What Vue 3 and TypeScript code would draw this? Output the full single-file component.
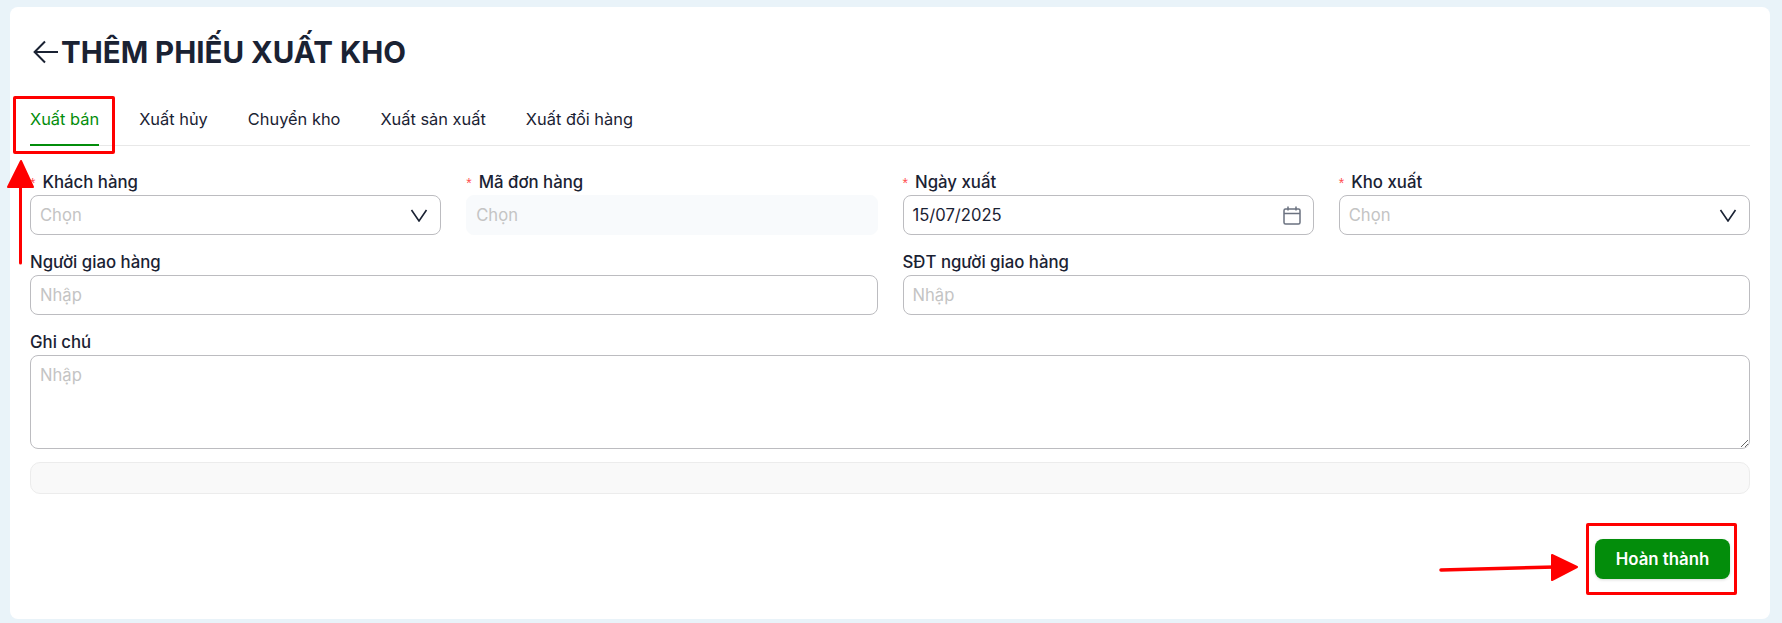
<script setup lang="ts">
const tabs: string[] = ['Xuất bán', 'Xuất hủy', 'Chuyển kho', 'Xuất sản xuất', 'Xuất đổi hàng']
</script>

<template>
  <div class="page">
    <main class="card">
      <header class="head">
        <svg class="back" width="26" height="26" viewBox="0 0 26 26" fill="none" stroke="#1a2233" stroke-width="2" aria-hidden="true">
          <path d="M25 13H2M12 2.500 1.600 13 12 23.500" />
        </svg>
        <h1>THÊM PHIẾU XUẤT KHO</h1>
      </header>

      <nav class="tabs">
        <span v-for="(t, i) in tabs" :key="t" class="tab" :class="{ active: i === 0 }">{{ t }}</span>
      </nav>

      <form class="form">
        <div class="field">
          <label><i>*</i>Khách hàng</label>
          <div class="box">
            <span class="ph">Chọn</span>
            <svg class="chev" width="18" height="13" viewBox="0 0 18 13" fill="none" stroke="#1a2233" stroke-width="1.600"><path d="M1.500 1 9 12l7.500-11" /></svg>
          </div>
        </div>
        <div class="field">
          <label><i>*</i>Mã đơn hàng</label>
          <div class="box disabled"><span class="ph">Chọn</span></div>
        </div>
        <div class="field">
          <label><i>*</i>Ngày xuất</label>
          <div class="box">
            <span class="val">15/07/2025</span>
            <svg width="18" height="19" viewBox="0 0 18 19" fill="none" stroke="#6b7280" stroke-width="1.500"><rect x="1" y="3" width="16" height="15" rx="1.500" /><path d="M1 7.500h16M5 .5v4M13 .5v4" /></svg>
          </div>
        </div>
        <div class="field">
          <label><i>*</i>Kho xuất</label>
          <div class="box">
            <span class="ph">Chọn</span>
            <svg class="chev" width="18" height="13" viewBox="0 0 18 13" fill="none" stroke="#1a2233" stroke-width="1.600"><path d="M1.500 1 9 12l7.500-11" /></svg>
          </div>
        </div>
        <div class="field half">
          <label>Người giao hàng</label>
          <div class="box"><span class="ph">Nhập</span></div>
        </div>
        <div class="field half">
          <label>SĐT người giao hàng</label>
          <div class="box"><span class="ph">Nhập</span></div>
        </div>
        <div class="field full">
          <label>Ghi chú</label>
          <textarea class="area" placeholder="Nhập"></textarea>
        </div>
        <div class="bar full"></div>
      </form>

      <footer class="foot">
        <button type="button" class="done">Hoàn thành</button>
      </footer>
    </main>

    <div class="mark mark-tab"></div>
    <div class="mark mark-btn"></div>
    <svg class="arrows" width="1782" height="623" viewBox="0 0 1782 623" fill="#ff0000" stroke="#ff0000" stroke-linejoin="round" stroke-linecap="round">
      <path d="M20.500 263V186" stroke-width="3" fill="none" />
      <path d="M21 161 33 187 8 187Z" stroke-width="2" />
      <path d="M1441 570 1555 567" stroke-width="3.500" fill="none" />
      <path d="M1552 555 1577 567 1552 580Z" stroke-width="2" />
    </svg>
  </div>
</template>

<style scoped>
.page {
  position: relative;
  width: 1782px;
  height: 623px;
  box-sizing: border-box;
  padding: 7px 12px 4px 10px;
  background: #e9f3f9;
  font-family: Inter, "Noto Sans", sans-serif;
  color: #1a2233;
  overflow: hidden;
}
.card {
  height: 100%;
  box-sizing: border-box;
  background: #fff;
  border-radius: 8px;
  padding: 0 20px;
  display: flex;
  flex-direction: column;
}
.head {
  display: flex;
  align-items: center;
  gap: 2px;
  height: 90px;
  padding-left: 3px;
}
.back { flex: none; }
h1 {
  margin: 0;
  font-size: 29.500px;
  font-weight: 700;
  line-height: 34px;
}
.tabs {
  display: flex;
  gap: 40px;
  height: 48px;
  border-bottom: 1px solid #e8e8e8;
}
.tab {
  height: 48px;
  line-height: 44px;
  font-size: 16.400px;
  box-sizing: border-box;
}
.tab.active {
  color: #038d0b;
  border-bottom: 2px solid #038d0b;
  height: 49px;
}
.form {
  display: grid;
  grid-template-columns: repeat(4, minmax(0, 1fr));
  gap: 15px 25px;
  margin-top: 24px;
}
.field { display: flex; flex-direction: column; }
.half { grid-column: span 2; }
.full { grid-column: 1 / -1; }
label {
  display: block;
  height: 24px;
  margin-bottom: 1px;
  line-height: 24px;
  font-size: 16.800px;
  font-weight: 500;
}
label i {
  font-style: normal;
  font-weight: 400;
  font-size: 14px;
  color: #ff4d4f;
  margin-right: 7px;
  font-family: "Liberation Sans", sans-serif;
}
.box {
  height: 40px;
  box-sizing: border-box;
  border: 1px solid #bcbcc0;
  border-radius: 8px;
  padding: 0 12px 0 9px;
  display: flex;
  align-items: center;
  justify-content: space-between;
  font-size: 16.600px;
  background: #fff;
}
.box.disabled {
  background: #f8fafc;
  border-color: #f8fafc;
}
.ph { color: #c4c4c4; }
.val { color: #1a2233; }
.area {
  display: block;
  width: 100%;
  height: 94px;
  box-sizing: border-box;
  border: 1px solid #bcbcc0;
  border-radius: 8px;
  padding: 7px 9px;
  font: 400 16.600px/24px Inter, "Noto Sans", sans-serif;
  outline: none;
  resize: vertical;
}
.area::placeholder { color: #c4c4c4; opacity: 1; }
.bar {
  height: 32px;
  margin-top: -2px;
  box-sizing: border-box;
  background: #f9f9f9;
  border: 1px solid #ececec;
  border-radius: 10px;
}
.foot {
  display: flex;
  justify-content: flex-end;
  margin-top: 45px;
  padding-right: 20px;
}
.done {
  width: 135px;
  height: 40px;
  border: 0;
  border-radius: 8px;
  background: #038d0b;
  color: #fff;
  font: 600 16.800px Inter, "Noto Sans", sans-serif;
  box-shadow: 0 1px 3px rgba(0, 0, 0, 0.15);
}
.mark {
  position: absolute;
  box-sizing: border-box;
  border: 3px solid #ff0000;
  border-radius: 2px;
}
.mark-tab { left: 13px; top: 96px; width: 102px; height: 58px; }
.mark-btn { left: 1586px; top: 523px; width: 151px; height: 72px; }
.arrows { position: absolute; left: 0; top: 0; pointer-events: none; }
</style>
